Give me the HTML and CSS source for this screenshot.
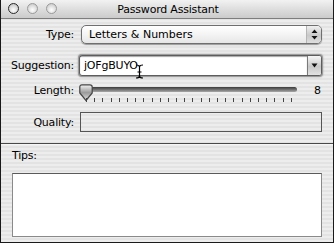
FILE: index.html
```html
<!DOCTYPE html>
<html lang="en">
<head>
    <meta charset="UTF-8">
    <title>Password Assistant</title>
    <link rel="stylesheet" href="styles.css">
</head>
<body>
    <div class="window">
        <div class="titlebar">
            <div class="lights">
                <span class="light light-close"></span>
                <span class="light"></span>
                <span class="light"></span>
            </div>
            <span class="title">Password Assistant</span>
        </div>

        <div class="form">
            <div class="row row-type">
                <span class="label">Type:</span>
                <div class="popup">
                    <span class="popup-text">Letters &amp; Numbers</span>
                    <span class="popup-arrows">
                        <svg width="7" height="11" viewBox="0 0 7 11"><path d="M3.5 0.5 L6.5 4 L0.5 4 Z M3.5 10.5 L6.5 7 L0.5 7 Z" fill="#111"/></svg>
                    </span>
                </div>
            </div>

            <div class="row row-suggestion">
                <span class="label">Suggestion:</span>
                <div class="combo">
                    <div class="combo-field">
                        <span>jOFgBUYO</span>
                        <svg class="ibeam" width="9" height="15" viewBox="0 0 9 15"><path d="M1 1 Q4.5 1 4.5 3 Q4.5 1 8 1 M4.5 3 L4.5 12 M1 14 Q4.5 14 4.5 12 Q4.5 14 8 14 M2.5 8 L6.5 8" stroke="#000" stroke-width="1.2" fill="none"/></svg>
                    </div>
                    <span class="combo-button">
                        <svg width="7" height="5" viewBox="0 0 7 5"><path d="M0.5 0.5 L6.5 0.5 L3.5 4.5 Z" fill="#111"/></svg>
                    </span>
                </div>
            </div>

            <div class="row row-length">
                <span class="label">Length:</span>
                <div class="slider">
                    <div class="track"></div>
                    <svg class="knob" width="14" height="18" viewBox="0 0 14 18">
                        <defs>
                            <linearGradient id="kg" x1="0" y1="0" x2="0" y2="1">
                                <stop offset="0" stop-color="#f4f4f4"/>
                                <stop offset="0.5" stop-color="#9a9a9a"/>
                                <stop offset="1" stop-color="#e0e0e0"/>
                            </linearGradient>
                        </defs>
                        <path d="M3 0.8 L11 0.8 Q13.2 0.8 13.2 3 L13.2 9 L7 16.5 L0.8 9 L0.8 3 Q0.8 0.8 3 0.8 Z" fill="url(#kg)" stroke="#444" stroke-width="1.2"/>
                    </svg>
                    <div class="ticks" id="ticks"></div>
                </div>
                <span class="value">8</span>
            </div>

            <div class="row row-quality">
                <span class="label">Quality:</span>
                <div class="quality"></div>
            </div>
        </div>

        <div class="separator"></div>

        <div class="tips">
            <span class="label-tips">Tips:</span>
            <div class="tips-box"></div>
        </div>
    </div>

    <script>
        const ticks = document.getElementById('ticks');
        for (let i = 0; i < 26; i++) {
            const t = document.createElement('span');
            t.className = 'tick';
            ticks.appendChild(t);
        }
    </script>
</body>
</html>
```

FILE: styles.css
```css
body {
    margin: 0;
    font-family: "DejaVu Sans", Verdana, sans-serif;
    font-size: 11px;
    color: #000;
    background-color: #fff;
}
.window {
    width: 334px;
    height: 243px;
    box-sizing: border-box;
    border: 1px solid #1a1a1a;
    border-top: none;
    background: repeating-linear-gradient(to bottom, #ededed 0px, #ededed 2px, #e3e3e3 2px, #e3e3e3 4px);
    display: flex;
    flex-direction: column;
}
.titlebar {
    height: 18px;
    position: relative;
    background: linear-gradient(to bottom, #f2f2f2, #dadada 60%, #cbcbcb);
    border-bottom: 1px solid #7d7d7d;
    display: flex;
    align-items: center;
    justify-content: center;
}
.lights {
    position: absolute;
    left: 7px;
    top: 3px;
    display: flex;
    gap: 8px;
}
.light {
    width: 9px;
    height: 9px;
    border-radius: 50%;
    border: 1px solid #9a9a9a;
    background: radial-gradient(circle at 50% 65%, #ffffff, #d4d4d4 70%, #b0b0b0);
}
.light-close {
    border-color: #2a2a2a;
    background: radial-gradient(circle at 50% 65%, #ffffff, #cfcfcf 70%, #8a8a8a);
}
.title {
    font-size: 11px;
    letter-spacing: -0.2px;
    padding-left: 2px;
}
.form {
    padding: 6px 11px 0 0;
    display: flex;
    flex-direction: column;
}
.row {
    display: flex;
    align-items: center;
}
.label {
    width: 73px;
    text-align: right;
    flex-shrink: 0;
    letter-spacing: -0.2px;
}
.row-type {
    height: 19px;
}
.popup {
    margin-left: 7px;
    flex: 1;
    height: 19px;
    box-sizing: border-box;
    border: 1px solid #6f6f6f;
    border-radius: 5px;
    background: linear-gradient(to bottom, #ffffff, #f4f4f4 50%, #e6e6e6);
    box-shadow: 0 1px 1px rgba(0, 0, 0, 0.35);
    display: flex;
    align-items: center;
}
.popup-text {
    flex: 1;
    padding-left: 7px;
}
.popup-arrows {
    width: 15px;
    height: 17px;
    box-sizing: border-box;
    border-left: 1px solid #b5b5b5;
    border-radius: 0 4px 4px 0;
    background: linear-gradient(to bottom, #f0f0f0, #c9c9c9 55%, #dedede);
    display: flex;
    align-items: center;
    justify-content: center;
}
.row-suggestion {
    margin-top: 11px;
    height: 21px;
}
.combo {
    margin-left: 5px;
    flex: 1;
    height: 21px;
    box-sizing: border-box;
    border: 1px solid #5d5d5d;
    border-radius: 3px;
    box-shadow: 0 0 0 1px #9c9c9c, 0 0 2px 1px rgba(0, 0, 0, 0.3);
    background-color: #fff;
    display: flex;
    align-items: center;
    overflow: visible;
}
.combo-field {
    flex: 1;
    height: 100%;
    padding-left: 4px;
    display: flex;
    align-items: center;
    position: relative;
    box-shadow: inset 0 1px 1px rgba(0, 0, 0, 0.35);
    letter-spacing: -0.2px;
}
.ibeam {
    position: absolute;
    left: 55px;
    top: 8px;
}
.combo-button {
    width: 14px;
    height: 19px;
    box-sizing: border-box;
    border-left: 1px solid #7a7a7a;
    border-radius: 0 2px 2px 0;
    background: linear-gradient(to bottom, #f6f6f6, #c8c8c8 55%, #e2e2e2);
    display: flex;
    align-items: center;
    justify-content: center;
}
.row-length {
    margin-top: 9px;
    height: 19px;
    align-items: flex-start;
}
.row-length .label {
    line-height: 14px;
    margin-top: -1px;
}
.slider {
    margin-left: 5px;
    width: 218px;
    height: 19px;
    position: relative;
}
.track {
    position: absolute;
    left: 2px;
    right: 0;
    top: 2px;
    height: 5px;
    border-radius: 3px;
    background: linear-gradient(to bottom, #3a3a3a, #7a7a7a 60%, #a8a8a8);
}
.knob {
    position: absolute;
    left: 0;
    top: -1px;
}
.ticks {
    position: absolute;
    left: 7px;
    width: 206px;
    top: 13px;
    display: flex;
    justify-content: space-between;
}
.tick {
    width: 1px;
    height: 4px;
    background-color: #444;
}
.value {
    margin-left: auto;
    line-height: 14px;
    margin-top: -1px;
    padding-right: 1px;
}
.row-quality {
    margin-top: 8px;
    height: 20px;
}
.quality {
    margin-left: 6px;
    flex: 1;
    height: 20px;
    box-sizing: border-box;
    border: 1px solid #555;
}
.separator {
    margin-top: 11px;
    height: 1px;
    background-color: #4a4a4a;
    border-bottom: 1px solid #f6f6f6;
}
.tips {
    padding: 3px 11px 0 11px;
    display: flex;
    flex-direction: column;
}
.label-tips {
    letter-spacing: -0.2px;
    line-height: 16px;
}
.tips-box {
    margin-top: 9px;
    height: 64px;
    box-sizing: border-box;
    border: 1px solid #8a8a8a;
    border-top-color: #5a5a5a;
    background-color: #fff;
}
```
